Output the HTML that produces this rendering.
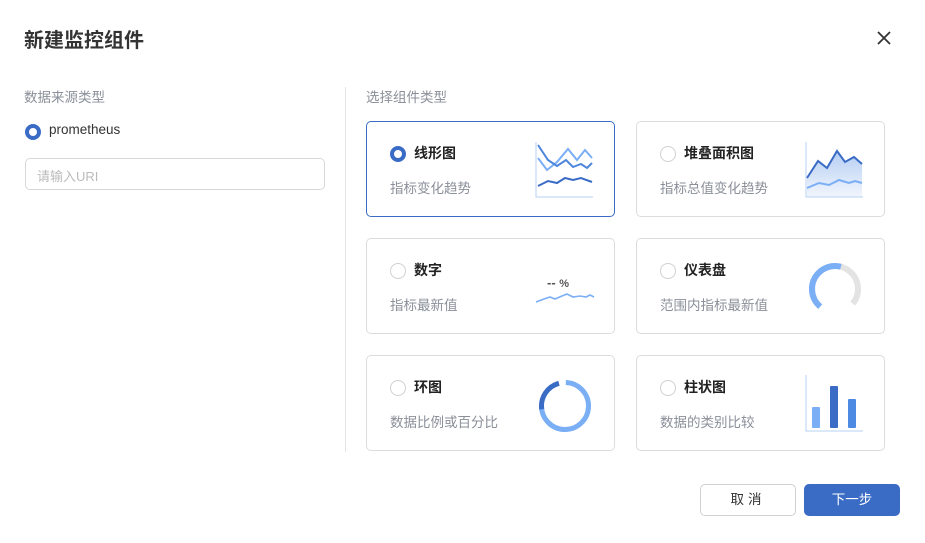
<!DOCTYPE html>
<html><head><meta charset="utf-8"><style>
*{margin:0;padding:0;box-sizing:border-box}
body{width:925px;height:543px;background:#fff;font-family:"Liberation Sans","Noto Sans CJK SC",sans-serif;position:relative;overflow:hidden;color:#333}
.a{position:absolute}
.card{position:absolute;width:249px;height:96px;border:1px solid #dcdcdc;border-radius:5px;background:#fff}
.card.sel{border-color:#3a6cc6}
.rd{position:absolute;left:23px;top:24px;width:16px;height:16px;border:1px solid #d0d0d0;border-radius:50%;background:#fff}
.rd.on{border:4.5px solid #3a6cc6}
.t{position:absolute;left:47px;top:21px;font-size:14px;font-weight:bold;color:#222}
.s{position:absolute;left:23px;top:55px;font-size:13.5px;color:#8a8f99}
.ch{position:absolute;left:168px;top:18px}
</style></head><body>
<div class="a" style="left:24px;top:24px;font-size:20px;font-weight:bold;color:#333">新建监控组件</div>
<svg class="a" style="left:877px;top:31px" width="14" height="14" viewBox="0 0 14 14"><path d="M1 1L13 13M13 1L1 13" stroke="#333" stroke-width="1.8"/></svg>
<div class="a" style="left:24px;top:86px;font-size:13.5px;color:#8a8f99">数据来源类型</div>
<div class="a" style="left:25px;top:124px;width:16px;height:16px;border:4.5px solid #3a6cc6;border-radius:50%"></div>
<div class="a" style="left:49px;top:122px;font-size:13.5px;color:#333">prometheus</div>
<div class="a" style="left:25px;top:158px;width:300px;height:32px;border:1px solid #d8d8d8;border-radius:5px;padding:7px 11px;font-size:13px;color:#bbb">请输入URI</div>
<div class="a" style="left:345px;top:87px;width:1px;height:365px;background:#e4e4e4"></div>
<div class="a" style="left:366px;top:86px;font-size:13.5px;color:#8a8f99">选择组件类型</div>

<div class="card sel" style="left:366px;top:121px"><div class="rd on"></div><div class="t">线形图</div><div class="s">指标变化趋势</div>
<svg class="ch" width="60" height="60"><path d="M1 2V57H58" stroke="#b7d0f5" fill="none"/><path d="M3 18L12 30L22 22L33 9L42 20L50 10L57 18" stroke="#7aaef5" stroke-width="2" fill="none"/><path d="M3 5L13 20L22 26L31 20L38 27L46 24L52 28L57 23" stroke="#4d86dc" stroke-width="2" fill="none"/><path d="M3 46L13 41L22 43L30 38L38 40L46 38L57 42" stroke="#3a6cc6" stroke-width="2" fill="none"/></svg></div>

<div class="card" style="left:636px;top:121px"><div class="rd"></div><div class="t">堆叠面积图</div><div class="s">指标总值变化趋势</div>
<svg class="ch" width="60" height="60"><defs><linearGradient id="g" x1="0" y1="0" x2="0" y2="1"><stop offset="0" stop-color="#b4cdf3"/><stop offset="1" stop-color="#f2f6fd"/></linearGradient></defs><path d="M2 38L13 21L22 28L32 11L40 22L49 17L57 24V57H2Z" fill="url(#g)"/><path d="M2 38L13 21L22 28L32 11L40 22L49 17L57 24" stroke="#3a6cc6" stroke-width="2" fill="none"/><path d="M2 48L14 43L24 45L34 40L44 43L50 41L57 43" stroke="#7aaef5" stroke-width="2" fill="none"/><path d="M1 2V57H58" stroke="#b7d0f5" fill="none"/></svg></div>

<div class="card" style="left:366px;top:238px"><div class="rd"></div><div class="t">数字</div><div class="s">指标最新值</div>
<div class="a" style="left:180px;top:36px;font-size:13px;font-weight:bold;color:#555">-- <span style="font-size:11px">%</span></div>
<svg class="ch" style="top:52px" width="60" height="15"><path d="M1 11L9 8L15 6L20 8L27 5L32 3L38 6L45 5L51 6L55 4L59 6" stroke="#7aaef5" stroke-width="1.6" fill="none"/></svg></div>

<div class="card" style="left:636px;top:238px"><div class="rd"></div><div class="t">仪表盘</div><div class="s">范围内指标最新值</div>
<svg class="a" style="left:170px;top:22px" width="56" height="56" viewBox="0 0 56 56"><circle cx="28" cy="28" r="23" fill="none" stroke="#e3e3e3" stroke-width="6" stroke-dasharray="108 200" transform="rotate(130 28 28)"/><circle cx="28" cy="28" r="23" fill="none" stroke="#7aaef5" stroke-width="6" stroke-dasharray="62 200" transform="rotate(130 28 28)"/></svg></div>

<div class="card" style="left:366px;top:355px"><div class="rd"></div><div class="t">环图</div><div class="s">数据比例或百分比</div>
<svg class="a" style="left:170px;top:22px" width="56" height="56" viewBox="0 0 56 56"><circle cx="28" cy="28" r="23.5" fill="none" stroke="#7aaef5" stroke-width="5" stroke-dasharray="110 200" transform="rotate(-88 28 28)"/><circle cx="28" cy="28" r="23.5" fill="none" stroke="#3a6cc6" stroke-width="5" stroke-dasharray="34 200" transform="rotate(180 28 28) rotate(-8 28 28)"/></svg></div>

<div class="card" style="left:636px;top:355px"><div class="rd"></div><div class="t">柱状图</div><div class="s">数据的类别比较</div>
<svg class="ch" style="top:18px" width="60" height="60"><path d="M1 1V57H58" stroke="#b7d0f5" fill="none"/><rect x="7" y="33" width="8" height="21" rx="1" fill="#7aaef5"/><rect x="25" y="12" width="8" height="42" rx="1" fill="#3a6cc6"/><rect x="43" y="25" width="8" height="29" rx="1" fill="#4d8ae4"/></svg></div>

<div class="a" style="left:700px;top:484px;width:96px;height:32px;border:1px solid #d0d0d0;border-radius:5px;text-align:center;line-height:30px;font-size:13.5px;color:#333;letter-spacing:4px">取消</div>
<div class="a" style="left:804px;top:484px;width:96px;height:32px;background:#3a6cc6;border-radius:5px;text-align:center;line-height:32px;font-size:13.5px;color:#fff">下一步</div>
</body></html>
